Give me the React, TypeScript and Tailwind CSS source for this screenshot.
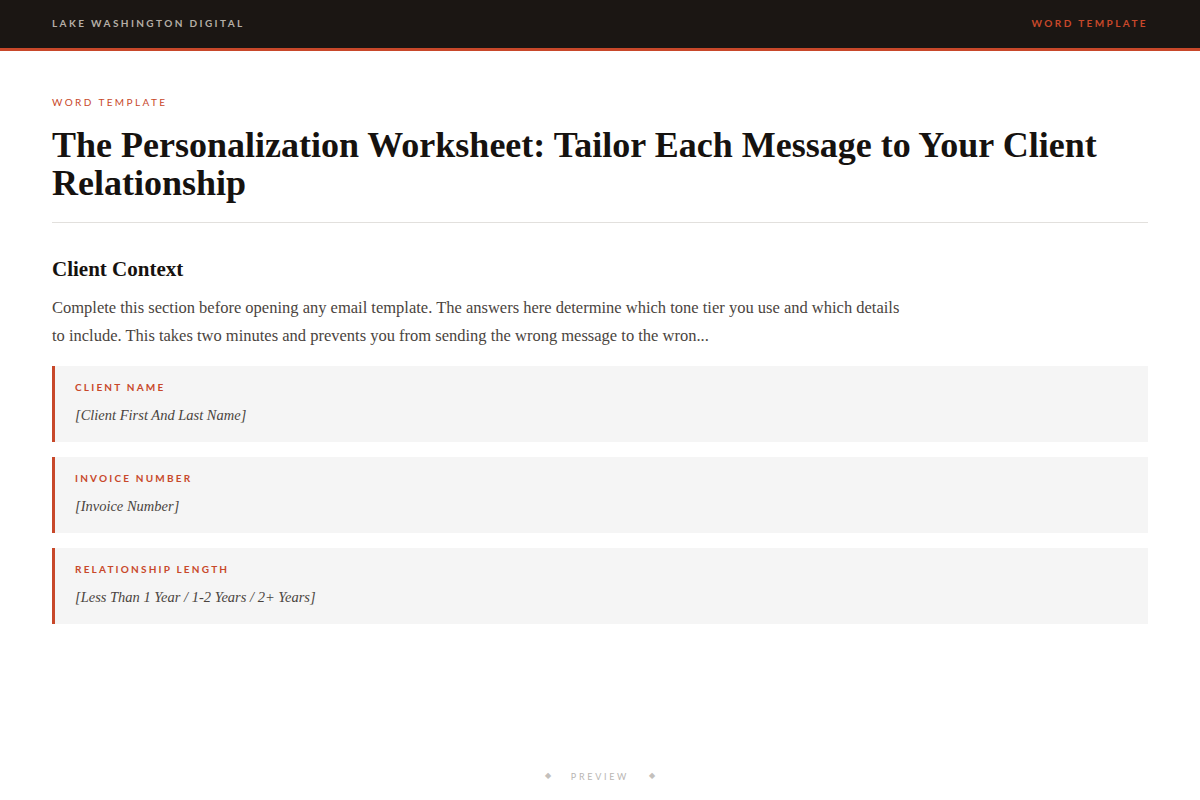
import React from "react";

const fields = [
  { label: "Client Name", value: "[Client First And Last Name]" },
  { label: "Invoice Number", value: "[Invoice Number]" },
  { label: "Relationship Length", value: "[Less Than 1 Year / 1-2 Years / 2+ Years]" },
];

const label = "font-['Lato','Liberation_Sans',sans-serif] uppercase";

export default function App() {
  return (
    <div className="min-h-[800px] bg-white flex flex-col font-['Liberation_Serif',serif]">
      <header className="h-[51px] bg-[#1b1613] border-b-[3px] border-[#c8482a] px-[52px] flex items-center justify-between">
        <span className={`${label} text-[10px] font-bold tracking-[0.24em] text-[#b5aea6] -mt-[2px]`}>
          Lake Washington Digital
        </span>
        <span className={`${label} text-[10px] font-bold tracking-[0.24em] text-[#c8482a] -mt-[2px]`}>
          Word Template
        </span>
      </header>

      <main className="flex-1 px-[52px] pt-[44px]">
        <div className={`${label} text-[10px] tracking-[0.24em] text-[#c8482a]`}>Word Template</div>
        <h1 className="mt-[16px] text-[36px] leading-[38px] font-bold text-[#16120f] pb-[20px] border-b border-[#e2e0dd]">
          The Personalization Worksheet: Tailor Each Message to Your Client Relationship
        </h1>

        <h2 className="mt-[33px] text-[21px] leading-[26px] font-bold text-[#16120f]">Client Context</h2>
        <p className="mt-[12px] max-w-[860px] text-[16.5px] leading-[28px] text-[#4a4440]">
          Complete this section before opening any email template. The answers here determine which tone tier you use and which details to include. This takes two minutes and prevents you from sending the wrong message to the wron...
        </p>

        <div className="mt-[16px] flex flex-col gap-[15px]">
          {fields.map((f) => (
            <div key={f.label} className="h-[76px] bg-[#f5f5f5] border-l-[3px] border-[#c8482a] pl-[20px] pt-[14px]">
              <div className={`${label} text-[10px] font-bold tracking-[0.22em] text-[#c8482a]`}>{f.label}</div>
              <div className="mt-[10px] text-[14.5px] italic text-[#4a4440]">{f.value}</div>
            </div>
          ))}
        </div>
      </main>

      <footer className="h-[48px] flex items-start justify-center gap-[20px] pt-[18px]">
        <span className="text-[8px] text-[#c4c0bc]">◆</span>
        <span className={`${label} text-[9px] tracking-[0.3em] text-[#b9b6b3]`}>Preview</span>
        <span className="text-[8px] text-[#c4c0bc]">◆</span>
      </footer>
    </div>
  );
}
